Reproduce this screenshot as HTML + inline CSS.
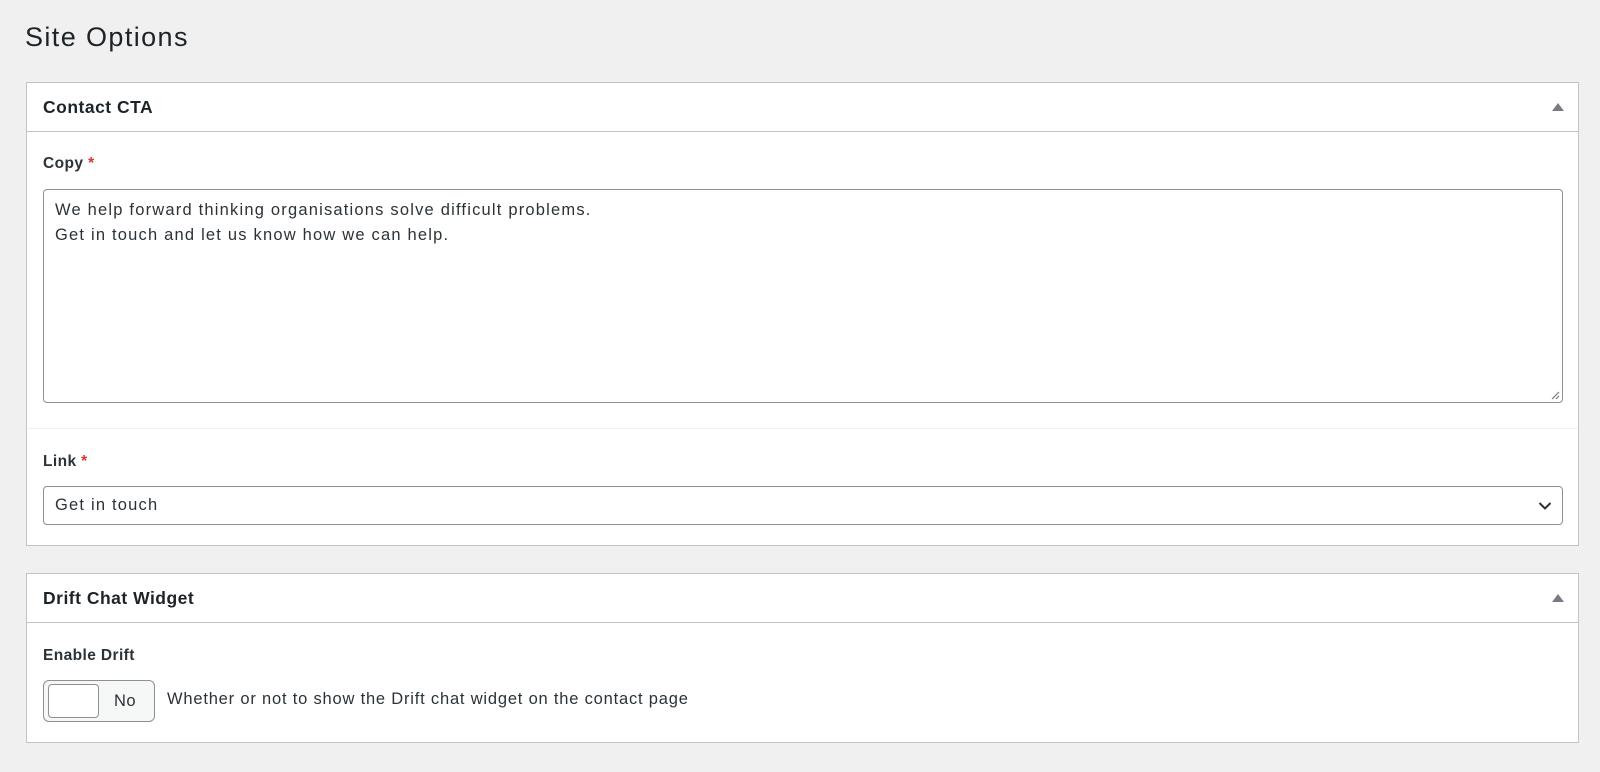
<!DOCTYPE html>
<html><head><meta charset="utf-8"><style>
*{box-sizing:border-box;margin:0;padding:0}
body{width:1600px;height:772px;background:#f0f0f1;font-family:"Liberation Sans",Arial,sans-serif;color:#1d2327;position:relative;overflow:hidden}
.a{position:absolute}
h1{position:absolute;left:25px;top:21px;font-size:27px;letter-spacing:1.4px;font-weight:400;line-height:32px;color:#1d2327}
.panel{position:absolute;left:26px;width:1553px;background:#fff;border:1px solid #c3c4c7}
.hd{height:49px;border-bottom:1px solid #c3c4c7;position:relative}
.hd span{position:absolute;left:16px;top:14px;font-size:17.5px;letter-spacing:0.5px;font-weight:700;color:#1d2327}
.tri{position:absolute;right:14px;top:20px;width:0;height:0;border-left:6px solid transparent;border-right:6px solid transparent;border-bottom:8px solid #787c82}
.lbl{position:absolute;left:16px;font-size:15.5px;letter-spacing:0.4px;font-weight:700;color:#2c3338}
.lbl b{color:#d63638}
.ctl{position:absolute;left:16px;width:1520px;border:1px solid #8c8f94;border-radius:4px;font-size:16.5px;letter-spacing:1.2px;color:#2c3338}
.t{font-size:16.5px;letter-spacing:0.8px;color:#2c3338}
</style></head><body>
<h1>Site Options</h1>
<div class="panel" style="top:82px;height:464px">
 <div class="hd"><span>Contact CTA</span><div class="tri"></div></div>
 <div class="lbl" style="top:72px">Copy <b>*</b></div>
 <div class="ctl" style="top:106px;height:214px;padding:8px 11px;line-height:25px">We help forward thinking organisations solve difficult problems.<br>Get in touch and let us know how we can help.
  <svg class="a" style="right:2px;bottom:2px" width="10" height="10"><path d="M9 2L2 9M9 6L6 9" stroke="#777" stroke-width="1.2"/></svg></div>
 <div class="a" style="left:0;right:0;top:345px;border-top:1px solid #f0f0f1"></div>
 <div class="lbl" style="top:370px">Link <b>*</b></div>
 <div class="ctl" style="top:403px;height:39px;padding:0 11px;line-height:37px">Get in touch
  <svg class="a" style="right:10px;top:14px" width="14" height="10"><path d="M1.5 2L7 7.5L12.5 2" stroke="#2c3338" stroke-width="2" fill="none"/></svg></div>
</div>
<div class="panel" style="top:573px;height:170px">
 <div class="hd"><span>Drift Chat Widget</span><div class="tri"></div></div>
 <div class="lbl" style="top:73px">Enable Drift</div>
 <div class="a" style="left:16px;top:106px;width:112px;height:42px;border:1px solid #8c8f94;border-radius:6px;background:#f6f7f7">
  <div class="a" style="left:4px;top:3px;width:51px;height:34px;background:#fff;border:1px solid #8c8f94;border-radius:4px"></div>
  <div class="a t" style="left:70px;top:11px;letter-spacing:0.5px">No</div>
 </div>
 <div class="a t" style="left:140px;top:116px">Whether or not to show the Drift chat widget on the contact page</div>
</div>
</body></html>
